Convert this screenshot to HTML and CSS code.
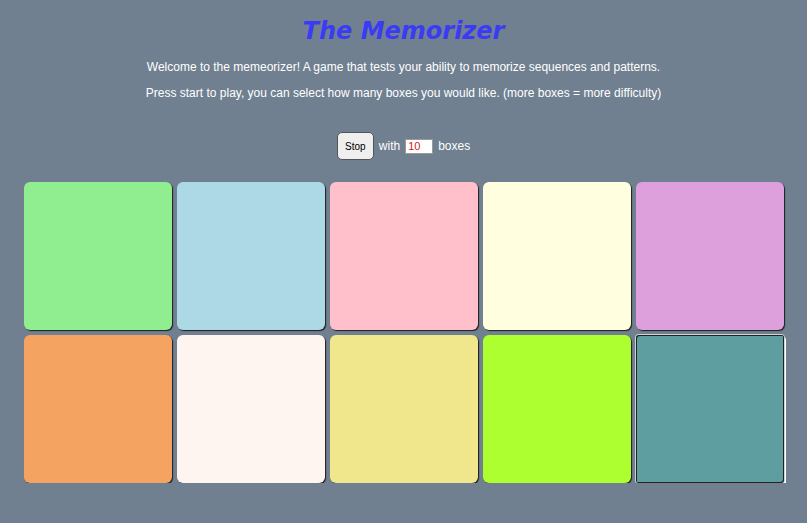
FILE: index.html
```html
<!DOCTYPE html>
<html>
<head>
<meta charset="utf-8">
<link rel="stylesheet" href="styles.css">
</head>
<body>
<h1 class="title">The Memorizer</h1>
<p class="intro">Welcome to the memeorizer! A game that tests your ability to memorize sequences and patterns.</p>
<p class="intro">Press start to play, you can select how many boxes you would like. (more boxes = more difficulty)</p>
<div class="controls">
  <button class="btn">Stop</button>
  <span>with</span>
  <input class="count" type="text" value="10">
  <span>boxes</span>
</div>
<div class="grid">
  <div class="box c1"></div>
  <div class="box c2"></div>
  <div class="box c3"></div>
  <div class="box c4"></div>
  <div class="box c5"></div>
  <div class="box c6"></div>
  <div class="box c7"></div>
  <div class="box c8"></div>
  <div class="box c9"></div>
  <div class="box c10 active"></div>
</div>
</body>
</html>
```

FILE: styles.css
```css
html, body {
  margin: 0;
  padding: 0;
}
body {
  background: #708090;
  font-family: "Liberation Sans", Arial, sans-serif;
  color: #fff;
  text-align: center;
}
.title {
  margin: 0;
  padding-top: 16px;
  font-family: "DejaVu Sans", Verdana, sans-serif;
  font-style: italic;
  font-weight: bold;
  font-size: 24px;
  line-height: 30px;
  color: #3b3bf5;
}
.intro {
  margin: 0;
  font-size: 12px;
  line-height: 16px;
}
.title + .intro {
  margin-top: 13px;
}
.intro + .intro {
  margin-top: 10px;
}
.controls {
  margin-top: 31px;
  display: flex;
  justify-content: center;
  align-items: center;
  gap: 5px;
  font-size: 12px;
}
.btn {
  width: 37px;
  height: 28px;
  padding: 0;
  font-family: "Liberation Sans", Arial, sans-serif;
  font-size: 10px;
  color: #000;
  background: #efefef;
  border: 1px solid #555;
  border-radius: 5px;
}
.count {
  width: 22px;
  height: 11px;
  padding: 1px 2px;
  margin: 0 0;
  border: 1px solid #999;
  background: #fff;
  color: #d02020;
  font-family: "Liberation Sans", Arial, sans-serif;
  font-size: 11px;
}
.grid {
  margin: 22px auto 0;
  width: 760px;
  display: grid;
  grid-template-columns: repeat(5, 148px);
  grid-auto-rows: 148px;
  gap: 5px;
}
.box {
  border-radius: 6px;
  box-shadow: 1px 1px 1px #1c1c1c;
}
.c1 { background: #90ee90; }
.c2 { background: #add8e6; }
.c3 { background: #ffc0cb; }
.c4 { background: #ffffe0; }
.c5 { background: #dda0dd; }
.c6 { background: #f4a460; }
.c7 { background: #fff5f0; }
.c8 { background: #f0e68c; }
.c9 { background: #adff2f; }
.c10 { background: #5f9ea0; }
.active {
  box-shadow: inset 1px 1px 0 #222, inset -1px -1px 0 #222, 0 0 0 1px #cfd3d6, 2px 2px 0 #fff;
  border-radius: 3px;
}
```
